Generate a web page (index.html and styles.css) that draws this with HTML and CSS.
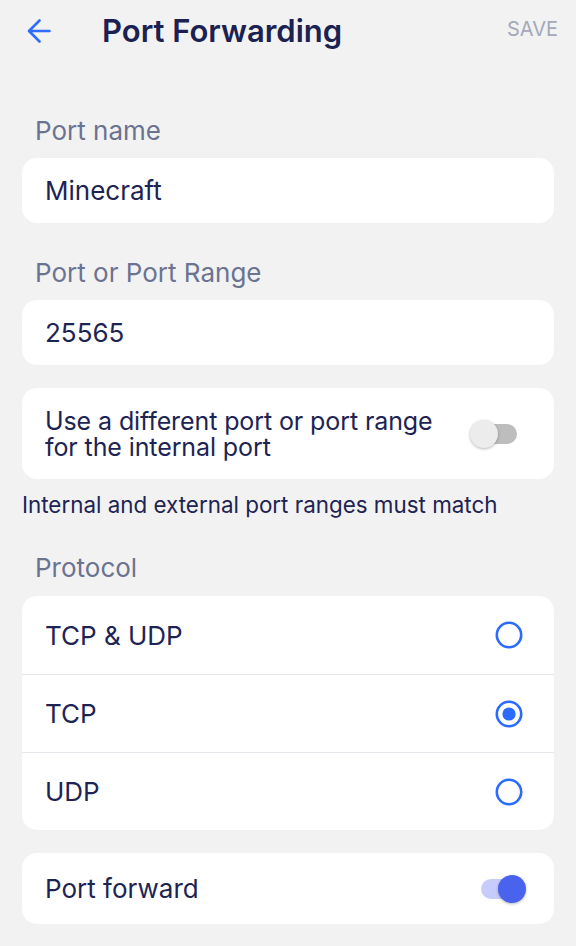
FILE: index.html
```html
<!DOCTYPE html>
<html lang="en">
<head>
<meta charset="utf-8">
<title>Port Forwarding</title>
<link rel="stylesheet" href="styles.css">
</head>
<body>
<header class="topbar">
  <svg class="back" viewBox="0 0 24 24" width="24" height="24" aria-hidden="true">
    <path d="M22.5 12H2.5M12.5 1.5L2 12l10.5 10.5" fill="none" stroke="#2f6cff" stroke-width="2.6" stroke-linecap="round" stroke-linejoin="round"/>
  </svg>
  <h1 class="title">Port Forwarding</h1>
  <span class="save">SAVE</span>
</header>

<main class="content">
  <div class="label">Port name</div>
  <div class="card field">Minecraft</div>

  <div class="label">Port or Port Range</div>
  <div class="card field">25565</div>

  <div class="card toggle-row tall">
    <span class="toggle-text">Use a different port or port range<br>for the internal port</span>
    <span class="switch"><span class="knob"></span></span>
  </div>
  <div class="helper">Internal and external port ranges must match</div>

  <div class="label">Protocol</div>
  <div class="card group">
    <div class="radio-row">
      <span>TCP &amp; UDP</span>
      <svg class="radio" viewBox="0 0 28 28" width="28" height="28"><circle cx="14" cy="14" r="12.2" fill="none" stroke="#2b6bff" stroke-width="2.6"/></svg>
    </div>
    <div class="radio-row">
      <span>TCP</span>
      <svg class="radio" viewBox="0 0 28 28" width="28" height="28"><circle cx="14" cy="14" r="12.2" fill="none" stroke="#2b6bff" stroke-width="2.6"/><circle cx="14" cy="14" r="6.6" fill="#2b6bff"/></svg>
    </div>
    <div class="radio-row">
      <span>UDP</span>
      <svg class="radio" viewBox="0 0 28 28" width="28" height="28"><circle cx="14" cy="14" r="12.2" fill="none" stroke="#2b6bff" stroke-width="2.6"/></svg>
    </div>
  </div>

  <div class="card toggle-row forward">
    <span>Port forward</span>
    <span class="switch on"><span class="knob"></span></span>
  </div>
</main>
</body>
</html>
```

FILE: styles.css
```css
* { box-sizing: border-box; }

html, body {
  margin: 0;
  padding: 0;
}

body {
  background: #f2f2f2;
  font-family: Inter, "Noto Sans", sans-serif;
  color: #1d2453;
  width: 576px;
  min-height: 946px;
}

.topbar {
  height: 62px;
  display: flex;
  align-items: center;
  padding: 0 18px 0 27px;
}

.back {
  display: block;
  flex: none;
}

.title {
  margin: 0 0 0 51px;
  font-size: 31px;
  font-weight: 600;
  color: #1b2150;
  line-height: 40px;
  flex: 1;
}

.save {
  font-size: 20px;
  color: #a4a8b9;
  font-weight: 400;
  margin-top: -4px;
}

.content {
  padding: 53px 22px 0;
  display: flex;
  flex-direction: column;
}

.label {
  font-size: 26px;
  line-height: 32px;
  color: #6b7391;
  padding-left: 13px;
  margin-bottom: 11px;
}

.card {
  background: #ffffff;
  border-radius: 15px;
}

.field {
  height: 65px;
  display: flex;
  align-items: center;
  padding: 0 23px;
  font-size: 26px;
  color: #1d2453;
  margin-bottom: 34px;
}

.toggle-row {
  display: flex;
  align-items: center;
  justify-content: space-between;
  padding: 0 37px 0 23px;
  font-size: 26px;
  color: #1d2453;
}

.field + .tall { margin-top: -11px; }

.tall {
  height: 91px;
}

.toggle-text {
  font-size: 25px;
  line-height: 26px;
  letter-spacing: -0.1px;
}

.helper {
  font-size: 22.4px;
  line-height: 28px;
  color: #1d2453;
  margin: 12px 0 33px;
}

.helper + .label {
  margin-bottom: 12px;
}

.switch {
  position: relative;
  width: 36px;
  height: 20px;
  border-radius: 10px;
  background: #bdbdbd;
  flex: none;
}

.knob {
  position: absolute;
  top: -4px;
  left: -11px;
  width: 28px;
  height: 28px;
  border-radius: 50%;
  background: #ececec;
  box-shadow: 0 1px 3px rgba(0, 0, 0, 0.28);
}

.switch.on {
  background: #c7cdfb;
}

.switch.on .knob {
  left: 17px;
  background: #4a63ef;
}

.group {
  display: flex;
  flex-direction: column;
}

.radio-row {
  height: 78px;
  display: flex;
  align-items: center;
  justify-content: space-between;
  padding: 0 31px 0 23px;
  font-size: 26px;
  color: #1d2453;
  border-top: 1px solid #e6e7ed;
}

.radio-row:first-child {
  border-top: none;
}

.radio {
  display: block;
  flex: none;
}

.forward {
  height: 71px;
  margin-top: 23px;
}
```
